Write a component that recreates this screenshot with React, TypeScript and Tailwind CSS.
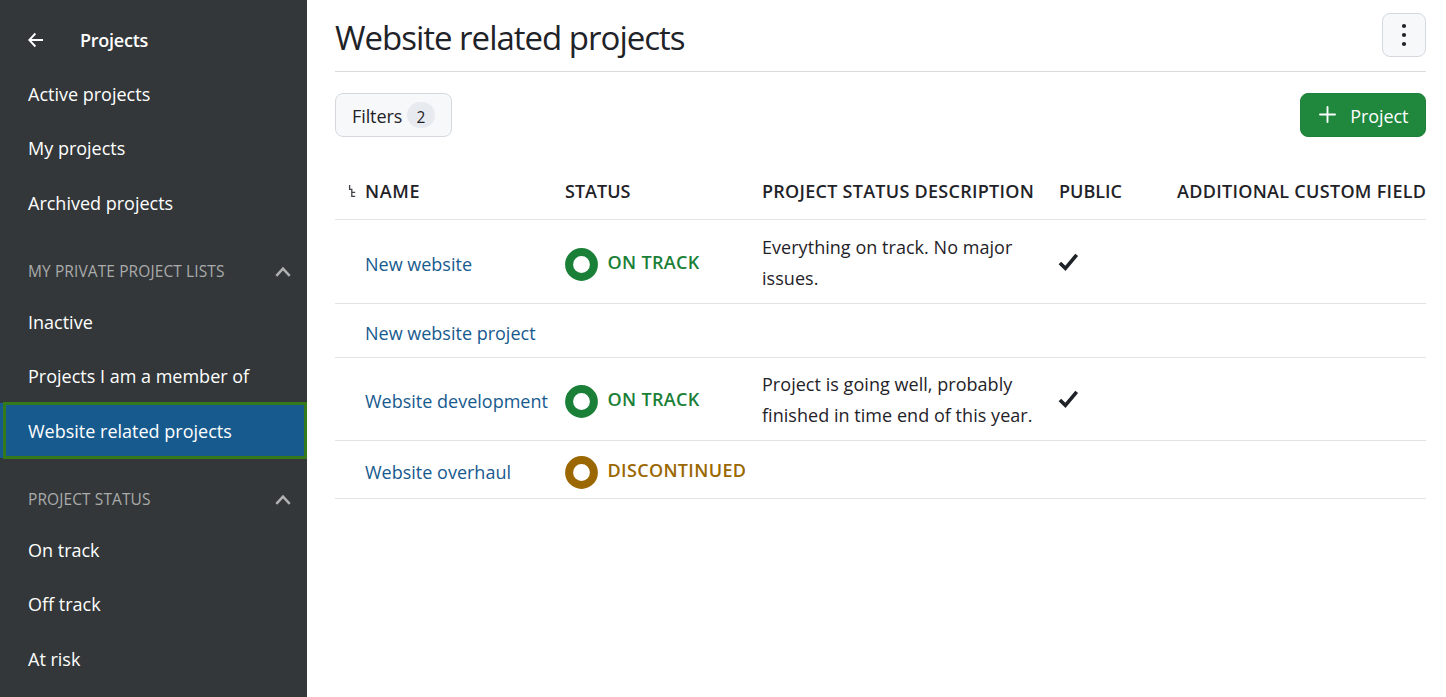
import type { ReactNode } from "react";

function MenuItem({ label, active = false }: { label: string; active?: boolean }) {
  return (
    <a
      className={
        active
          ? "relative flex h-[54.5px] items-center bg-[#175a8e] pl-7 text-white"
          : "flex h-[54.5px] items-center pl-7 text-white"
      }
    >
      {active && <span className="absolute -top-[1.6px] -bottom-px left-[3px] right-0 border-3 border-[#35791d]" />}
      <span className="relative">{label}</span>
    </a>
  );
}

function MenuHeading({ label }: { label: string }) {
  return (
    <div className="flex h-[64.5px] items-center justify-between pt-4 pl-7 pr-4 text-[15.5px] tracking-[0.1px] text-[#aaabab]">
      <span className="pt-px">{label}</span>
      <svg className="mt-[3px]" width="16" height="12" viewBox="0 0 16 12" fill="none" stroke="#b0b1b1" strokeWidth="2.5">
        <path d="M1.3 9.8 8 2.6l6.7 7.2" />
      </svg>
    </div>
  );
}

function Status({ kind }: { kind: "on" | "off" }) {
  const on = kind === "on";
  return (
    <div className={on ? "flex items-center text-[#1a7f37]" : "flex items-center text-[#9a6700]"}>
      <svg width="33" height="33" viewBox="0 0 33 33" fill="none" stroke="currentColor" strokeWidth="8">
        <circle cx="16.5" cy="16.5" r="12.4" />
      </svg>
      <span className="-mt-1.5 ml-[9.5px] text-[18px] font-semibold tracking-[0.35px] whitespace-nowrap">
        {on ? "ON TRACK" : "DISCONTINUED"}
      </span>
    </div>
  );
}

function Check() {
  return (
    <svg className="-mt-1 -ml-px" width="21" height="19" viewBox="0 0 20 19" fill="none" stroke="#1f2328" strokeWidth="3.6">
      <path d="M1.4 10 6.9 15.4 18.2 1.8" />
    </svg>
  );
}

type Project = { name: string; status?: "on" | "off"; text?: ReactNode; open?: boolean; size: string };

const projects: Project[] = [
  { name: "New website", status: "on", text: <>Everything on track. No major<br />issues.</>, open: true, size: "h-[84px] pt-1.5" },
  { name: "New website project", size: "h-[54px] pt-1.5" },
  { name: "Website development", status: "on", text: <>Project is going well, probably<br />finished in time end of this year.</>, open: true, size: "h-[83px] pt-[5px]" },
  { name: "Website overhaul", status: "off", size: "h-[58px] pt-1.5" },
];

const columns = "grid grid-cols-[30px_200px_197px_297px_118px_1fr] items-center border-b border-[#e1e3e5]";

export default function App() {
  return (
    <div className="flex h-[697px] w-[1446px] overflow-hidden bg-white font-['Open_Sans','Noto_Sans',sans-serif] text-[18px] leading-[30px] text-[#1f2328]">
      <aside className="w-[307px] shrink-0 bg-[#333739]">
        <header className="flex h-[66.4px] items-center pt-3.5 pl-7 text-white">
          <svg width="16" height="16" viewBox="0 0 16 16" fill="none" stroke="white" strokeWidth="1.9">
            <path d="M7.4 1.5 1.2 8l6.2 6.5M1 8h14" />
          </svg>
          <span className="ml-9 font-semibold tracking-[-0.25px]">Projects</span>
        </header>
        <nav>
          <MenuItem label="Active projects" />
          <MenuItem label="My projects" />
          <MenuItem label="Archived projects" />
          <MenuHeading label="MY PRIVATE PROJECT LISTS" />
          <MenuItem label="Inactive" />
          <MenuItem label="Projects I am a member of" />
          <MenuItem label="Website related projects" active />
          <MenuHeading label="PROJECT STATUS" />
          <MenuItem label="On track" />
          <MenuItem label="Off track" />
          <MenuItem label="At risk" />
        </nav>
      </aside>

      <main className="flex-1 pl-7 pr-5">
        <div className="flex h-[72px] items-start justify-between border-b border-[#d8dadd] pt-[13px]">
          <h1 className="text-[33px] leading-[49px] tracking-[-1px]">Website related projects</h1>
          <button className="flex size-11 items-center justify-center rounded-lg border border-[#d5d9de] bg-[#f6f8fa]">
            <svg width="6" height="24" viewBox="0 0 6 24" fill="#1f2328">
              <circle cx="3" cy="3" r="2.1" />
              <circle cx="3" cy="12" r="2.1" />
              <circle cx="3" cy="21" r="2.1" />
            </svg>
          </button>
        </div>

        <div className="flex justify-between pt-[21px]">
          <button className="flex h-11 w-[117px] items-center rounded-lg border border-[#d5d9de] bg-[#f6f8fa] pl-4">
            <span className="w-[51px] pt-0.5 text-left tracking-[-0.1px]">Filters</span>
            <span className="ml-1 flex h-[26px] w-7 items-center justify-center rounded-full bg-[#e7eaef] pt-[3px] text-[15.5px]">2</span>
          </button>
          <button className="flex h-11 w-[126px] items-center rounded-lg border border-[#1f8139] bg-[#1f883d] pl-[18px] text-white">
            <svg className="-mt-0.5" width="17" height="17" viewBox="0 0 17 17" stroke="white" strokeWidth="1.9" strokeLinecap="round">
              <path d="M8.5 1v15M1 8.5h15" />
            </svg>
            <span className="ml-[14px] pt-0.5 tracking-[-0.1px]">Project</span>
          </button>
        </div>

        <section className="mt-[27px]">
          <div className={columns + " h-14 pb-0.5 font-semibold whitespace-nowrap"}>
            <svg className="ml-[13px]" width="8" height="14" viewBox="0 0 8 14" fill="none" stroke="#3f4347" strokeWidth="1.3">
              <path d="M1.6 1v4.4h2.2v7h3.4M3.8 8.3h3.4" />
            </svg>
            <span className="tracking-[0.6px]">NAME</span>
            <span>STATUS</span>
            <span className="tracking-[0.27px]">PROJECT STATUS DESCRIPTION</span>
            <span>PUBLIC</span>
            <span className="tracking-[0.3px]">ADDITIONAL CUSTOM FIELD</span>
          </div>
          {projects.map((p) => (
            <div key={p.name} className={columns + " " + p.size}>
              <span />
              <a className="pb-0.5 text-[#175a8e]">{p.name}</a>
              <div>{p.status && <Status kind={p.status} />}</div>
              <div className="pb-1 leading-[30.5px] tracking-[0.04px] whitespace-nowrap">{p.text}</div>
              <div>{p.open && <Check />}</div>
              <span />
            </div>
          ))}
        </section>
      </main>
    </div>
  );
}
